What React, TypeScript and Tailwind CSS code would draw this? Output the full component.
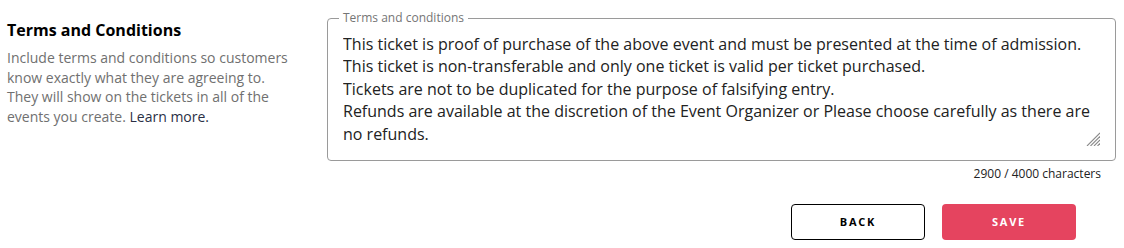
import { useState } from "react";

const INITIAL_TEXT =
  "This ticket is proof of purchase of the above event and must be presented at the time of admission.\n" +
  "This ticket is non-transferable and only one ticket is valid per ticket purchased.\n" +
  "Tickets are not to be duplicated for the purpose of falsifying entry.\n" +
  "Refunds are available at the discretion of the Event Organizer or Please choose carefully as there are no refunds.";

function ResizeGrip() {
  return (
    <svg width="14" height="14" viewBox="0 0 14 14" className="pointer-events-none absolute bottom-[14px] right-[15px]">
      <g stroke="#8a8a8a" strokeWidth="1.1">
        <line x1="1" y1="14" x2="14" y2="1" />
        <line x1="4.5" y1="14" x2="14" y2="4.5" />
        <line x1="8" y1="14" x2="14" y2="8" />
        <line x1="11.5" y1="14" x2="14" y2="11.5" />
      </g>
    </svg>
  );
}

export default function App() {
  const [text, setText] = useState(INITIAL_TEXT);

  return (
    <div className="flex bg-white font-['Open_Sans',sans-serif] text-[#222]">
      <div className="w-[327px] shrink-0 pl-[7px] pr-[30px] pt-[18px]">
        <h2 className="text-[16px] font-bold leading-[24px] text-black">Terms and Conditions</h2>
        <p className="mt-[6px] text-[14px] leading-[19.6px] text-[#707070]">
          Include terms and conditions so customers know exactly what they are agreeing to. They will show on the
          tickets in all of the events you create. <span className="text-[#2a2f45]">Learn more.</span>
        </p>
      </div>

      <div className="flex-1 pr-[8px] pt-[10px]">
        <fieldset className="relative rounded-[4px] border border-[#9a9a9a] p-0">
          <legend className="ml-[11px] px-[4px] text-[12px] leading-[16px] text-[#757575]">Terms and conditions</legend>
          <div className="px-[15px] pb-[13px]">
            <textarea
              value={text}
              onChange={(e) => setText(e.target.value)}
              className="block h-[121px] w-full resize-none bg-transparent p-0 pt-[7px] text-[16px] leading-[22.4px] text-[#222] outline-none"
            />
          </div>
          <ResizeGrip />
        </fieldset>
        <div className="mt-[5px] pr-[15px] text-right text-[12px] leading-[16px] text-[#222]">2900 / 4000 characters</div>

        <div className="mr-[40px] mt-[22px] flex justify-end gap-[17px]">
          <button className="h-[36px] w-[134px] rounded-[4px] border border-black bg-white text-[11px] font-bold tracking-[0.16em] text-black">
            BACK
          </button>
          <button className="h-[36px] w-[134px] rounded-[4px] bg-[#e5445f] text-[11px] font-bold tracking-[0.16em] text-white">
            SAVE
          </button>
        </div>
      </div>
    </div>
  );
}
